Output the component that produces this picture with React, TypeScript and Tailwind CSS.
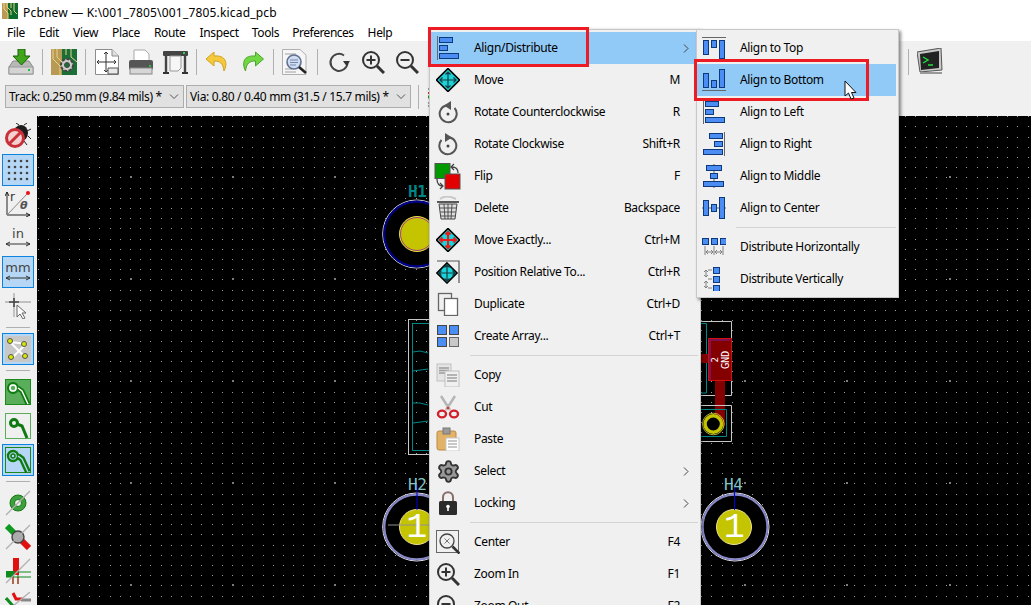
import type { ReactNode } from 'react';
import { Settings } from 'lucide-react';

const BLUE = '#4b8df2';
const NAVY = '#0c3a7c';

// canvas grid, one path so the dots stay on whole pixels
let minorDots = '';
for (let i = 0; i < 98; i++) {
  for (let j = 0; j < 48; j++) {
    minorDots += `M${Math.round(38.2 + i * 10.2)} ${Math.round(116.2 + j * 10.2)}h1v1h-1z`;
  }
}
let majorDots = '';
for (let i = 0; i < 9; i++) {
  for (let j = 0; j < 5; j++) {
    majorDots += `M${Math.round(129.5 + i * 102.4)} ${Math.round(176 + j * 102)}h2v2h-2z`;
  }
}

const menuItems = [
  { label: 'File', cls: '' },
  { label: 'Edit', cls: '' },
  { label: 'View', cls: '' },
  { label: 'Place', cls: '' },
  { label: 'Route', cls: '' },
  { label: 'Inspect', cls: '' },
  { label: 'Tools', cls: '-ml-px' },
  { label: 'Preferences', cls: '-ml-px tracking-[-0.5px]' },
  { label: 'Help', cls: '' },
];

function Ico({ children, s = 24 }: { children: ReactNode; s?: number }) {
  return (
    <svg width={s} height={s} viewBox="0 0 24 24" className="shrink-0 block">
      {children}
    </svg>
  );
}

function Bar({ x, y, w, h }: { x: number; y: number; w: number; h: number }) {
  return <rect x={x} y={y} width={w} height={h} fill={BLUE} stroke={NAVY} strokeWidth="1" shapeRendering="crispEdges" />;
}

function Line({ d, c = '#666666', w = 1 }: { d: string; c?: string; w?: number }) {
  return <path d={d} stroke={c} strokeWidth={w} fill="none" />;
}

const AlignLeft = () => (
  <Ico>
    <Line d="M1.5 0V24" />
    <Bar x={3.5} y={1.5} w={13} h={5} />
    <Bar x={3.5} y={9.5} w={8} h={5} />
    <Bar x={3.5} y={17.5} w={19} h={5} />
  </Ico>
);
const AlignRight = () => (
  <Ico>
    <Line d="M22.5 0V24" />
    <Bar x={7.5} y={1.5} w={13} h={5} />
    <Bar x={12.5} y={9.5} w={8} h={5} />
    <Bar x={1.5} y={17.5} w={19} h={5} />
  </Ico>
);
const AlignTop = () => (
  <Ico>
    <Line d="M0 1.5H24" />
    <Bar x={1.5} y={4.5} w={5} h={14} />
    <Bar x={9.5} y={4.5} w={5} h={7} />
    <Bar x={17.5} y={4.5} w={5} h={18} />
  </Ico>
);
const AlignBottom = () => (
  <Ico>
    <Line d="M0 22.5H24" />
    <Bar x={1.5} y={5.5} w={5} h={14} />
    <Bar x={9.5} y={12.5} w={5} h={7} />
    <Bar x={17.5} y={1.5} w={5} h={18} />
  </Ico>
);
const AlignMiddle = () => (
  <Ico>
    <Line d="M12 0V24" />
    <Bar x={4.5} y={1.5} w={15} h={5} />
    <Bar x={8.5} y={9.5} w={7} h={5} />
    <Bar x={1.5} y={17.5} w={20} h={5} />
  </Ico>
);
const AlignCenter = () => (
  <Ico>
    <Line d="M0 12H24" />
    <Bar x={1.5} y={4.5} w={5} h={15} />
    <Bar x={9.5} y={8.5} w={5} h={7} />
    <Bar x={17.5} y={1.5} w={5} h={21} />
  </Ico>
);
const DistH = () => (
  <Ico>
    <Bar x={0.5} y={3.5} w={6} h={6} />
    <Bar x={9.5} y={3.5} w={6} h={6} />
    <Bar x={18.5} y={3.5} w={6} h={6} />
    <Line d="M3 11V20M12 11V20M21 11V20M4 17H11M13 17H20M6 15L4 17L6 19M9 15L11 17L9 19M15 15L13 17L15 19M18 15L20 17L18 19" c="#808080" />
  </Ico>
);
const DistV = () => (
  <Ico>
    <Bar x={11.5} y={0.5} w={6} h={6} />
    <Bar x={11.5} y={9.5} w={6} h={6} />
    <Bar x={11.5} y={18.5} w={6} h={6} />
    <Line d="M4 3V10M4 14V21M6 3H10M6 12H10M6 21H10M2 5L4 3L6 5M2 8L4 10L6 8M2 16L4 14L6 16M2 19L4 21L6 19" c="#808080" />
  </Ico>
);

const Diamond = ({ r = false, corner = false }: { r?: boolean; corner?: boolean }) => (
  <Ico>
    {corner && <Line d="M1 1H23V23" c="#555555" w={1.2} />}
    <path d={corner ? 'M11 3L21 13L11 23L1 13Z' : 'M12 0.5L23.5 12L12 23.5L0.5 12Z'} fill="#19d3d8" stroke="#000000" strokeWidth="1.6" />
    <g transform={corner ? 'translate(-1 1)' : undefined}>
      <Line d="M12 4V20M4 12H20M9.5 6.5L12 4L14.5 6.5M9.5 17.5L12 20L14.5 17.5M6.5 9.5L4 12L6.5 14.5M17.5 9.5L20 12L17.5 14.5" c={r ? '#e81c1c' : '#1b3a40'} w={r ? 2 : 1.2} />
    </g>
  </Ico>
);

const Rotate = ({ cw = false }: { cw?: boolean }) => (
  <Ico>
    <g transform={cw ? undefined : 'translate(24 0) scale(-1 1)'}>
      <path d="M14 5.5A8.5 8.5 0 1 1 5.5 8" stroke="#555555" strokeWidth="2" fill="none" />
      <path d="M9 1L16 5.5L9 10Z" fill="#555555" />
      <circle cx="12" cy="14" r="1.5" fill="#444444" />
    </g>
  </Ico>
);

const Flip = () => (
  <svg width="27" height="27" viewBox="0 0 27 27" className="shrink-0 block -ml-[2px]">
    <rect x="1" y="0.5" width="15" height="15" fill="#009a00" stroke="#555555" />
    <rect x="11" y="11" width="15" height="15" fill="#e30000" stroke="#555555" />
    <Line d="M18 4C22 4 24 6 24 10M20 1L17 4L20 7M3 16C3 20 5 23 9 23M6 20L9 23L6 26" c="#444444" w={1.3} />
  </svg>
);

const Trash = () => (
  <Ico>
    <path d="M4 3C8 0 14 0 20 3" stroke="#c8c8c8" strokeWidth="2" fill="none" />
    <path d="M1 6H23" stroke="#333333" strokeWidth="1.6" />
    <path d="M3 8L5 23H19L21 8Z" fill="#dddddd" stroke="#444444" />
    <Line d="M8 8L9 23M12 8V23M16 8L15 23M4 12H20M4.5 16H19.5M5 20H19" c="#444444" w={0.9} />
  </Ico>
);

const Duplicate = () => (
  <Ico>
    <rect x="2.5" y="1.5" width="13" height="17" fill="#f0f0f0" stroke="#666666" strokeWidth="1.3" />
    <rect x="8.5" y="6.5" width="13" height="17" fill="#ffffff" stroke="#666666" strokeWidth="1.3" />
  </Ico>
);

const ArrayIco = () => (
  <Ico>
    <rect x="1.5" y="1.5" width="9" height="9" fill={BLUE} stroke="#444444" />
    <rect x="13.5" y="1.5" width="9" height="9" fill={BLUE} stroke="#444444" />
    <rect x="1.5" y="13.5" width="9" height="9" fill={BLUE} stroke="#444444" />
    <rect x="13.5" y="13.5" width="9" height="9" fill="#c8c8c8" stroke="#666666" />
  </Ico>
);

const CopyIco = () => (
  <Ico>
    <rect x="1" y="1" width="14" height="17" fill="#e4e4e4" stroke="#c0c0c0" />
    <Line d="M3 5H13M3 7.5H13M3 10H13" c="#9a9a9a" w={1.4} />
    <rect x="9" y="8" width="14" height="16" fill="#f0f0f0" stroke="#c0c0c0" />
    <Line d="M11 12H21M11 15H21M11 18H21" c="#a0a0a0" w={1.4} />
  </Ico>
);

const Cut = () => (
  <Ico>
    <Line d="M5 1L14 15M19 1L10 15" c="#b4b4b4" w={2.4} />
    <circle cx="12" cy="13" r="1.3" fill="#d33" />
    <ellipse cx="6" cy="19" rx="4" ry="3.4" fill="none" stroke="#d11f2c" strokeWidth="2.4" />
    <ellipse cx="18" cy="19" rx="4" ry="3.4" fill="none" stroke="#d11f2c" strokeWidth="2.4" />
  </Ico>
);

const Paste = () => (
  <Ico>
    <rect x="1" y="4" width="19" height="19" rx="2" fill="#e2b367" stroke="#b98a42" />
    <rect x="7" y="1" width="7" height="6" fill="#9a9a9a" stroke="#777777" />
    <rect x="10" y="11" width="13" height="13" fill="#ffffff" stroke="#c8c8c8" />
    <Line d="M12 14H21M12 17H21M12 20H21" c="#909090" />
  </Ico>
);

const Gear = () => <Settings size={25} strokeWidth={1.8} className="text-[#333333] fill-[#999999] shrink-0" />;

const Lock = () => (
  <Ico>
    <path d="M7 11V6.5C7 -0.5 17 -0.5 17 6.5V11" stroke="#8a6f68" strokeWidth="2" fill="none" />
    <rect x="3" y="10" width="18" height="14" rx="1.5" fill="#2b2b2b" />
    <circle cx="12" cy="15.5" r="1.8" fill="#ffffff" />
    <rect x="11.2" y="16" width="1.6" height="4" fill="#ffffff" />
  </Ico>
);

const Mag = ({ mark }: { mark: 'plus' | 'minus' }) => (
  <Ico>
    <circle cx="10" cy="10" r="8" fill="none" stroke="#333333" strokeWidth="2" />
    <path d="M16 16L23 23" stroke="#333333" strokeWidth="3" />
    {mark === 'plus' && <path d="M5.5 10H14.5M10 5.5V14.5" stroke="#333333" strokeWidth="2" />}
    {mark === 'minus' && <path d="M5.5 10H14.5" stroke="#333333" strokeWidth="2" />}
  </Ico>
);

const CenterIco = () => (
  <Ico>
    <rect x="0.5" y="0.5" width="22" height="22" fill="none" stroke="#666666" />
    <circle cx="11" cy="11" r="7" fill="none" stroke="#444444" strokeWidth="1.3" />
    <path d="M8.5 8.5L13.5 13.5M13.5 8.5L8.5 13.5" stroke="#777777" />
    <path d="M16.5 16.5L23.5 23.5" stroke="#333333" strokeWidth="2.6" />
  </Ico>
);

type Row = { label: string; key?: string; icon: ReactNode; sub?: boolean; active?: boolean };

const mainA: Row[] = [
  { label: 'Align/Distribute', icon: <AlignLeft />, sub: true, active: true },
  { label: 'Move', key: 'M', icon: <Diamond /> },
  { label: 'Rotate Counterclockwise', key: 'R', icon: <Rotate /> },
  { label: 'Rotate Clockwise', key: 'Shift+R', icon: <Rotate cw /> },
  { label: 'Flip', key: 'F', icon: <Flip /> },
  { label: 'Delete', key: 'Backspace', icon: <Trash /> },
  { label: 'Move Exactly...', key: 'Ctrl+M', icon: <Diamond r /> },
  { label: 'Position Relative To...', key: 'Ctrl+R', icon: <Diamond corner /> },
  { label: 'Duplicate', key: 'Ctrl+D', icon: <Duplicate /> },
  { label: 'Create Array...', key: 'Ctrl+T', icon: <ArrayIco /> },
];
const mainB: Row[] = [
  { label: 'Copy', icon: <CopyIco /> },
  { label: 'Cut', icon: <Cut /> },
  { label: 'Paste', icon: <Paste /> },
  { label: 'Select', icon: <Gear />, sub: true },
  { label: 'Locking', icon: <Lock />, sub: true },
];
const mainC: Row[] = [
  { label: 'Center', key: 'F4', icon: <CenterIco /> },
  { label: 'Zoom In', key: 'F1', icon: <Mag mark="plus" /> },
  { label: 'Zoom Out', key: 'F2', icon: <Mag mark="minus" /> },
];
const subA: Row[] = [
  { label: 'Align to Top', icon: <AlignTop /> },
  { label: 'Align to Bottom', icon: <AlignBottom />, active: true },
  { label: 'Align to Left', icon: <AlignLeft /> },
  { label: 'Align to Right', icon: <AlignRight /> },
  { label: 'Align to Middle', icon: <AlignMiddle /> },
  { label: 'Align to Center', icon: <AlignCenter /> },
];
const subB: Row[] = [
  { label: 'Distribute Horizontally', icon: <DistH /> },
  { label: 'Distribute Vertically', icon: <DistV /> },
];

function MenuRow({ row }: { row: Row }) {
  return (
    <div className={`h-8 flex items-center pl-[5px] ${row.active ? 'bg-[#91c9f7]' : ''}`}>
      <div className="w-6 h-6 flex items-center justify-center">{row.icon}</div>
      <span className="ml-[14px] flex-1 whitespace-nowrap">{row.label}</span>
      {row.key && <span className="mr-[18px]">{row.key}</span>}
      {row.sub && (
        <svg width="6" height="9" viewBox="0 0 6 9" className="mr-[9px]">
          <path d="M1 0.5L5 4.5L1 8.5" stroke="#444444" fill="none" />
        </svg>
      )}
    </div>
  );
}

function MenuSep() {
  return (
    <div className="h-[7px] flex items-center pl-[39px]">
      <div className="h-px w-full bg-[#d4d4d4]" />
    </div>
  );
}

function TbSep({ wide = false }: { wide?: boolean }) {
  return (
    <div className={`h-[26px] flex justify-center ${wide ? 'w-[10px]' : 'w-[9px]'}`}>
      <div className="w-px h-full bg-[#b0b0b0]" />
    </div>
  );
}

function Tb({ children }: { children: ReactNode }) {
  return <div className="w-[34px] h-[34px] flex items-center justify-center">{children}</div>;
}

function Side({ children, on = false }: { children: ReactNode; on?: boolean }) {
  return (
    <div className="h-[34px] flex items-center justify-center">
      <div className={`w-8 h-8 flex items-center justify-center ${on ? 'bg-[#b5d7f5] border border-[#0a84e0]' : ''}`}>{children}</div>
    </div>
  );
}

function SideSep() {
  return (
    <div className="h-[9px] px-[6px] pt-[4px]">
      <div className="h-px bg-[#b0b0b0]" />
    </div>
  );
}

function PcbLogo({ s }: { s: number }) {
  return (
    <svg width={s} height={s} viewBox="0 0 16 16" className="block shrink-0">
      <rect width="16" height="16" fill="#0d6b2b" />
      <rect width="6" height="16" fill="#b89a55" />
      <path d="M2 0V6L6 10V16M5 0V4L9 8V12M9 0V5M12 0V8L15 11" stroke="#e6d38a" fill="none" />
    </svg>
  );
}

function Select({ label, w }: { label: string; w: string }) {
  return (
    <div className={`h-[23px] ${w} border border-[#adadad] bg-[#e1e1e1] flex items-center pl-[3px] pr-[4px]`}>
      <span className="flex-1 whitespace-nowrap">{label}</span>
      <svg width="10" height="6" viewBox="0 0 10 6">
        <path d="M1 0.5L5 4.5L9 0.5" stroke="#555555" fill="none" />
      </svg>
    </div>
  );
}

function Board() {
  return (
    <svg viewBox="37 116 994 489" className="flex-1 h-full block bg-black">
      <path d={minorDots} fill="#9c9c9c" shapeRendering="crispEdges" />
      <path d={majorDots} fill="#7c7c7c" shapeRendering="crispEdges" />

      {/* H1 */}
      <circle cx="416.7" cy="234" r="34" fill="#000000" stroke="#d8d8d8" strokeWidth="1" />
      <circle cx="416.7" cy="234" r="32.4" fill="none" stroke="#000088" strokeWidth="2.2" />
      <circle cx="417" cy="234" r="17.5" fill="#c4c400" stroke="#e0e040" strokeWidth="1" />
      <circle cx="417" cy="234" r="16.5" fill="none" stroke="#a020a0" strokeWidth="0.8" />
      <text x="408" y="197" fill="#008484" className="font-['DejaVu_Sans_Mono',monospace] text-[16px] font-bold">H1</text>

      {/* H2 */}
      <circle cx="416.7" cy="527" r="34" fill="#000000" stroke="#e8e8e8" strokeWidth="1" />
      <circle cx="416.7" cy="527" r="32.4" fill="none" stroke="#8888c8" strokeWidth="2.2" />
      <circle cx="417" cy="527" r="17.5" fill="#c4c400" stroke="#f0e090" strokeWidth="1" />
      <path d="M417 484V510" stroke="#0000e0" />
      <path d="M388 525H429" stroke="#909090" />
      <text x="408" y="490" fill="#84c4c4" className="font-['DejaVu_Sans_Mono',monospace] text-[16px]">H2</text>
      <text x="416.5" y="537" textAnchor="middle" fill="#ffffff" className="font-['Liberation_Mono',monospace] text-[35px]">1</text>

      {/* U1 */}
      <rect x="408.5" y="319.5" width="60" height="135" fill="none" stroke="#c8c8c8" />
      <rect x="412.5" y="323.5" width="60" height="127" fill="none" stroke="#008888" />
      <path d="M413 352L420 351L428 353M413 371L428 369M413 403L420 403L428 405M413 423L428 421" stroke="#008888" fill="none" />
      <path d="M700 321.5H731.5V395.5H700" fill="none" stroke="#c8c8c8" />
      <path d="M700 323.5H706.5V393H700" fill="none" stroke="#008888" />
      <rect x="701" y="354" width="10" height="9" fill="#840000" />
      <rect x="715" y="378" width="10" height="48" fill="#840000" />
      <rect x="708.5" y="338.5" width="23" height="42" fill="#840000" stroke="#d01010" />
      <path d="M710 380V340H730" fill="none" stroke="#8020a0" />
      <text transform="translate(718 360) rotate(-90)" textAnchor="middle" fill="#ffffff" className="font-['DejaVu_Sans_Mono',monospace] text-[9px]">2</text>
      <text transform="translate(729 360) rotate(-90)" textAnchor="middle" fill="#ffffff" className="font-['DejaVu_Sans_Mono',monospace] text-[10.5px]">GND</text>
      <path d="M700 405.5H731.5V441.5H700" fill="none" stroke="#c8c8c8" />
      <path d="M700 409.5H726.5V436.5H700" fill="none" stroke="#008888" />
      <circle cx="713.3" cy="424" r="8.25" fill="#000000" stroke="#c4c400" strokeWidth="3.5" />
      <circle cx="713.3" cy="424" r="10.8" fill="none" stroke="#e0e040" strokeWidth="0.8" />

      {/* H4 */}
      <circle cx="735" cy="527" r="34" fill="#000000" stroke="#e8e8e8" strokeWidth="1" />
      <circle cx="735" cy="527" r="32.4" fill="none" stroke="#8888c8" strokeWidth="2.2" />
      <circle cx="734" cy="527" r="17.5" fill="#c4c400" stroke="#f0e090" strokeWidth="1" />
      <path d="M734.5 484V510" stroke="#0000e0" />
      <text x="724" y="490" fill="#84c4c4" className="font-['DejaVu_Sans_Mono',monospace] text-[16px]">H4</text>
      <text x="734" y="537" textAnchor="middle" fill="#ffffff" className="font-['Liberation_Mono',monospace] text-[35px]">1</text>
    </svg>
  );
}

export default function App() {
  return (
    <div className="relative w-[1031px] h-[605px] overflow-hidden flex flex-col bg-white text-black text-[12px] tracking-[-0.33px] font-['Noto_Sans',sans-serif]">
      {/* title bar */}
      <div className="h-[22px] flex items-center pl-[2px] gap-[5px]">
        <PcbLogo s={16} />
        <span className="mt-[3px] tracking-[0.18px]">Pcbnew — K:\001_7805\001_7805.kicad_pcb</span>
      </div>
      {/* menu bar */}
      <div className="h-[19px] flex items-center pl-[7px] pt-[2px] gap-[14px]">
        {menuItems.map((m) => (
          <span key={m.label} className={m.cls}>
            {m.label}
          </span>
        ))}
      </div>
      {/* main toolbar */}
      <div className="h-10 bg-[#f0f0f0] flex items-center pl-1 pt-[1px]">
        <Tb>
          <svg width="26" height="26" viewBox="0 0 26 26">
            <path d="M1 18L5 12H21L25 18V25H1Z" fill="#b8b8b8" stroke="#8a8a8a" />
            <rect x="1" y="18" width="24" height="7" fill="#d4d4d4" stroke="#999999" />
            <rect x="20" y="20" width="2" height="2" fill="#22c040" />
            <path d="M10 0H17V7H22L13.5 16L5 7H10Z" fill="#3fa51a" stroke="#1d5c0a" />
          </svg>
        </Tb>
        <TbSep />
        <Tb>
          <svg width="26" height="26" viewBox="0 0 26 26">
            <rect width="26" height="26" fill="#1b6e35" />
            <rect width="11" height="26" fill="#b89a55" />
            <path d="M2 0V10L9 17V26M6 0V8L12 14M15 0V6M20 0V8L26 13" stroke="#e7d48c" fill="none" />
            <circle cx="16" cy="16" r="6" fill="#cccccc" stroke="#444444" strokeWidth="2" strokeDasharray="3 1.5" />
            <circle cx="16" cy="16" r="2.5" fill="#1b6e35" stroke="#444444" />
          </svg>
        </Tb>
        <TbSep />
        <Tb>
          <svg width="24" height="26" viewBox="0 0 24 26">
            <path d="M0.5 0.5H17L23.5 7V25.5H0.5Z" fill="#ffffff" stroke="#8c8c8c" />
            <path d="M17 0.5V7H23.5" fill="#e0e0e0" stroke="#8c8c8c" />
            <path d="M11 3V23M2 13H21M9 5L11 3L13 5M9 21L11 23L13 21M4 11L2 13L4 15M19 11L21 13L19 15" stroke="#333333" fill="none" />
            <path d="M13 19H23V25H13Z" fill="#e8e8e8" stroke="#555555" />
          </svg>
        </Tb>
        <Tb>
          <svg width="26" height="26" viewBox="0 0 26 26">
            <path d="M6 1H17L21 5V12H6Z" fill="#ffffff" stroke="#aaaaaa" />
            <rect x="1" y="11" width="24" height="10" rx="2" fill="#555555" />
            <rect x="2" y="19" width="22" height="6" fill="#d6d6d6" stroke="#888888" />
            <rect x="21" y="16" width="2" height="2" fill="#22c040" />
          </svg>
        </Tb>
        <Tb>
          <svg width="25" height="24" viewBox="0 0 25 24">
            <rect x="0" y="1" width="25" height="5" rx="1" fill="#444444" />
            <rect x="20" y="2" width="2" height="2" fill="#30d050" />
            <path d="M3 6V23M22 6V23" stroke="#444444" strokeWidth="2.4" />
            <path d="M0 23H6M19 23H25" stroke="#333333" strokeWidth="2" />
            <path d="M7 6H18V18L15 21H7Z" fill="#f6f6f6" stroke="#999999" />
          </svg>
        </Tb>
        <TbSep />
        <Tb>
          <svg width="22" height="22" viewBox="0 0 22 22" className="-ml-[3px]">
            <path d="M8 1L0 8L8 15V10C14 10 17 12 18 20C22 12 20 4 8 5Z" fill="#f6c93c" stroke="#cfa21f" />
          </svg>
        </Tb>
        <Tb>
          <svg width="23" height="22" viewBox="0 0 22 22">
            <path d="M14 1L22 8L14 15V10C8 10 5 12 4 20C0 12 2 4 14 5Z" fill="#71d643" stroke="#4ca62a" />
          </svg>
        </Tb>
        <TbSep />
        <Tb>
          <svg width="26" height="26" viewBox="0 0 26 26">
            <path d="M0.5 0.5H18L24 6V25.5H0.5Z" fill="#f6f6f6" stroke="#b0b0b0" />
            <path d="M3 5H14M3 20H10M3 23H14" stroke="#a0a0a0" />
            <circle cx="12" cy="13" r="7" fill="#d0dcf0" stroke="#607090" strokeWidth="1.6" />
            <path d="M8 11H16M8 13.5H16M8 16H14" stroke="#7088b0" />
            <path d="M17 18L24 24" stroke="#222222" strokeWidth="2.6" />
          </svg>
        </Tb>
        <TbSep wide />
        <Tb>
          <svg width="22" height="22" viewBox="0 0 22 22">
            <path d="M16 4.5A8.5 8.5 0 1 0 19.5 11.5" stroke="#444444" strokeWidth="2" fill="none" />
            <path d="M15 10H22L18.5 15Z" fill="#333333" />
          </svg>
        </Tb>
        <Tb>
          <Mag mark="plus" />
        </Tb>
        <Tb>
          <Mag mark="minus" />
        </Tb>
        <div className="w-[446px]" />
        <Tb>
          <div />
        </Tb>
        <TbSep />
        <Tb>
          <svg width="26" height="27" viewBox="0 0 26 27">
            <path d="M0 4L24 0L25 22L3 24Z" fill="#c8c8c8" stroke="#555555" />
            <path d="M3 6L22 3V20L4 22Z" fill="#222222" />
            <path d="M6 9L11 12L6 15M11 17H16" stroke="#22e040" strokeWidth="1.4" fill="none" />
            <path d="M3 25H25" stroke="#999999" strokeWidth="2" />
          </svg>
        </Tb>
      </div>
      {/* track / via toolbar */}
      <div className="h-[35px] bg-[#f0f0f0] flex items-start pl-[5px] pt-[4px] gap-[2px]">
        <Select label="Track: 0.250 mm (9.84 mils) *" w="w-[179px]" />
        <Select label="Via: 0.80 / 0.40 mm (31.5 / 15.7 mils) *" w="w-[225px]" />
        <div className="w-px h-[24px] ml-[5px] bg-[#b0b0b0]" />
        <svg width="5" height="20" viewBox="0 0 5 20" className="ml-[7px] mt-[2px]">
          <path d="M0 2H5M0 16H5M0 19H5" stroke="#444444" />
          <path d="M0 6H5" stroke="#e02020" strokeWidth="2" />
          <path d="M0 10H5" stroke="#10a010" strokeWidth="3" />
        </svg>
      </div>
      {/* body */}
      <div className="flex-1 flex min-h-0">
        <div className="w-[37px] bg-[#f0f0f0] pt-[3px] pr-px shrink-0 h-full overflow-hidden">
          <Side>
            <svg width="26" height="26" viewBox="0 0 26 26">
              <ellipse cx="16" cy="10" rx="7" ry="8" fill="#1c1c1c" />
              <path d="M14 2L11 0M19 2L22 0M22 8L26 6M23 13L26 16M19 18L22 22" stroke="#222222" />
              <circle cx="10" cy="15" r="8.5" fill="#f4d0d0" stroke="#c9303a" strokeWidth="3" />
              <path d="M4 21L16 9" stroke="#c9303a" strokeWidth="3" />
            </svg>
          </Side>
          <Side on>
            <svg width="24" height="22" viewBox="0 0 24 22">
              {[2, 8, 14, 20].map((y) =>
                [3, 9, 15, 21].map((x) => <circle key={`${x}-${y}`} cx={x} cy={y} r="1.3" fill="#444444" />)
              )}
            </svg>
          </Side>
          <Side>
            <svg width="26" height="26" viewBox="0 0 26 26">
              <path d="M2 1V24H25M2 1L0 5M2 1L4 5M25 24L21 22M25 24L21 26" stroke="#222222" fill="none" />
              <path d="M2 24L22 3" stroke="#888888" />
              <circle cx="23" cy="2" r="2" fill="#ee1111" />
              <text x="5" y="10" fill="#333333" className="text-[12px] font-['DejaVu_Sans',sans-serif]">r</text>
              <text x="15" y="18" fill="#555555" className="text-[11px] italic font-bold font-['DejaVu_Sans',sans-serif]">θ</text>
            </svg>
          </Side>
          <Side>
            <svg width="26" height="22" viewBox="0 0 26 22">
              <text x="13" y="11" textAnchor="middle" fill="#444444" className="text-[13px] tracking-normal font-['DejaVu_Sans',sans-serif]">in</text>
              <path d="M1 17H25M1 17L5 15M1 17L5 19M25 17L21 15M25 17L21 19" stroke="#333333" fill="none" />
            </svg>
          </Side>
          <Side on>
            <svg width="26" height="22" viewBox="0 0 26 22">
              <text x="13" y="11" textAnchor="middle" fill="#444444" className="text-[13px] tracking-normal font-['DejaVu_Sans',sans-serif]">mm</text>
              <path d="M1 17H25M1 17L5 15M1 17L5 19M25 17L21 15M25 17L21 19" stroke="#333333" fill="none" />
            </svg>
          </Side>
          <Side>
            <svg width="26" height="26" viewBox="0 0 26 26">
              <path d="M0 9H26M9 0V7M9 12V24" stroke="#b0b0b0" strokeWidth="1.4" />
              <path d="M4 9H14M9 5V14" stroke="#444444" strokeWidth="1.6" />
              <path d="M12 12V24L15 21L18 26L20 25L17 20H21Z" fill="#ffffff" stroke="#666666" />
            </svg>
          </Side>
          <SideSep />
          <Side on>
            <svg width="26" height="26" viewBox="0 0 26 26">
              <rect width="26" height="26" fill="#c8c8c8" />
              <path d="M5 6L22 8M5 6L20 21M20 9L7 22" stroke="#ffffff" strokeWidth="2" />
              <circle cx="5" cy="5" r="2.5" fill="#d8e800" stroke="#555555" />
              <circle cx="19" cy="8" r="2.5" fill="#d8e800" stroke="#555555" />
              <circle cx="6" cy="21" r="2.5" fill="#d8e800" stroke="#555555" />
              <circle cx="20" cy="20" r="2.5" fill="#d8e800" stroke="#555555" />
            </svg>
          </Side>
          <SideSep />
          <Side>
            <svg width="26" height="26" viewBox="0 0 26 26">
              <rect x="0.5" y="0.5" width="25" height="25" fill="#5aad5a" stroke="#1b8a1b" />
              <circle cx="8" cy="9" r="5" fill="none" stroke="#0f7a0f" strokeWidth="2" />
              <circle cx="8" cy="9" r="3" fill="none" stroke="#ffffff" strokeWidth="1.6" />
              <path d="M13 9L17 12L23 25" stroke="#0f7a0f" strokeWidth="5" fill="none" />
              <path d="M13 9L17 12L23 25" stroke="#ffffff" strokeWidth="1.4" fill="none" />
            </svg>
          </Side>
          <Side>
            <svg width="26" height="26" viewBox="0 0 26 26">
              <rect x="0.5" y="0.5" width="25" height="25" fill="#f0f0f0" stroke="#5aad5a" />
              <circle cx="9" cy="10" r="3.5" fill="none" stroke="#0f7a0f" strokeWidth="3" />
              <path d="M12 11L17 13L22 25" stroke="#0f7a0f" strokeWidth="3" fill="none" />
            </svg>
          </Side>
          <Side on>
            <svg width="26" height="26" viewBox="0 0 26 26">
              <rect x="0.5" y="0.5" width="25" height="25" fill="none" stroke="#1b8a1b" />
              <circle cx="8" cy="9" r="5" fill="none" stroke="#0f7a0f" strokeWidth="2.4" />
              <circle cx="8" cy="9" r="2" fill="none" stroke="#0f7a0f" strokeWidth="1.5" />
              <path d="M13 9L17 12L23 25" stroke="#0f7a0f" strokeWidth="6" fill="none" />
              <path d="M13 9L17 12L23 25" stroke="#b5d7f5" strokeWidth="1.4" fill="none" />
            </svg>
          </Side>
          <SideSep />
          <Side>
            <svg width="26" height="26" viewBox="0 0 26 26">
              <circle cx="13" cy="13" r="8" fill="#3f9f3f" stroke="#0f7a0f" />
              <circle cx="13" cy="13" r="3.5" fill="#f0f0f0" stroke="#0f7a0f" />
              <path d="M1 25L25 1" stroke="#b0b0b0" strokeWidth="1.3" />
            </svg>
          </Side>
          <Side>
            <svg width="26" height="26" viewBox="0 0 26 26">
              <path d="M2 2L12 12" stroke="#0f9a1f" strokeWidth="6" />
              <path d="M14 14L24 24" stroke="#e01010" strokeWidth="6" />
              <circle cx="13" cy="13" r="6" fill="#aaaaaa" stroke="#444444" strokeWidth="1.4" />
              <path d="M1 25L25 1" stroke="#b0b0b0" strokeWidth="1.3" />
            </svg>
          </Side>
          <Side>
            <svg width="26" height="26" viewBox="0 0 26 26">
              <rect x="8" y="0" width="6" height="17" fill="#e01010" />
              <rect x="1" y="13" width="8" height="6" fill="#0f8a1f" />
              <path d="M1 14H26M1 19H26M8 17V26M13 17V26" stroke="#0f8a1f" />
              <path d="M8 19V26M13 19V26" stroke="#e01010" />
              <path d="M1 25L25 1" stroke="#b0b0b0" strokeWidth="1.3" />
            </svg>
          </Side>
          <Side>
            <svg width="26" height="26" viewBox="0 0 26 26">
              <path d="M1 6L8 14" stroke="#0f8a1f" strokeWidth="3" fill="none" />
              <path d="M8 1L11 7H18" stroke="#e01010" strokeWidth="3" fill="none" />
              <path d="M16 8H26" stroke="#888888" strokeWidth="3" />
              <path d="M8 14L25 0" stroke="#b0b0b0" strokeWidth="1.3" />
            </svg>
          </Side>
        </div>
        <Board />
      </div>

      {/* context menu */}
      <div className="absolute left-[429px] top-[29px] w-[272px] h-[600px] pt-[2px] pl-px pr-[2px] bg-[#f0f0f0] border border-[#c8c8c8] shadow-[1px_1px_3px_rgba(0,0,0,0.4)]">
        {mainA.map((r) => (
          <MenuRow key={r.label} row={r} />
        ))}
        <MenuSep />
        {mainB.map((r) => (
          <MenuRow key={r.label} row={r} />
        ))}
        <MenuSep />
        {mainC.map((r) => (
          <MenuRow key={r.label} row={r} />
        ))}
      </div>

      {/* submenu */}
      <div className="absolute left-[696px] top-[29px] w-[203px] h-[269px] pt-[2px] pr-[2px] bg-[#f0f0f0] border border-[#c8c8c8] shadow-[2px_2px_3px_rgba(0,0,0,0.45)]">
        {subA.map((r) => (
          <MenuRow key={r.label} row={r} />
        ))}
        <MenuSep />
        {subB.map((r) => (
          <MenuRow key={r.label} row={r} />
        ))}
      </div>

      {/* red annotation frames */}
      <div className="absolute left-[428px] top-[27px] w-[161px] h-[40px] border-[3px] border-[#ed1c24]" />
      <div className="absolute left-[694px] top-[59px] w-[175px] h-[42px] border-[3px] border-[#ed1c24]" />

      {/* pointer */}
      <svg width="15" height="21" viewBox="0 0 15 21" className="absolute left-[844px] top-[80px]">
        <path d="M1 1V16L4.5 13L7 19L10 18L7.5 12.5H12Z" fill="#ffffff" stroke="#111111" />
      </svg>
    </div>
  );
}
